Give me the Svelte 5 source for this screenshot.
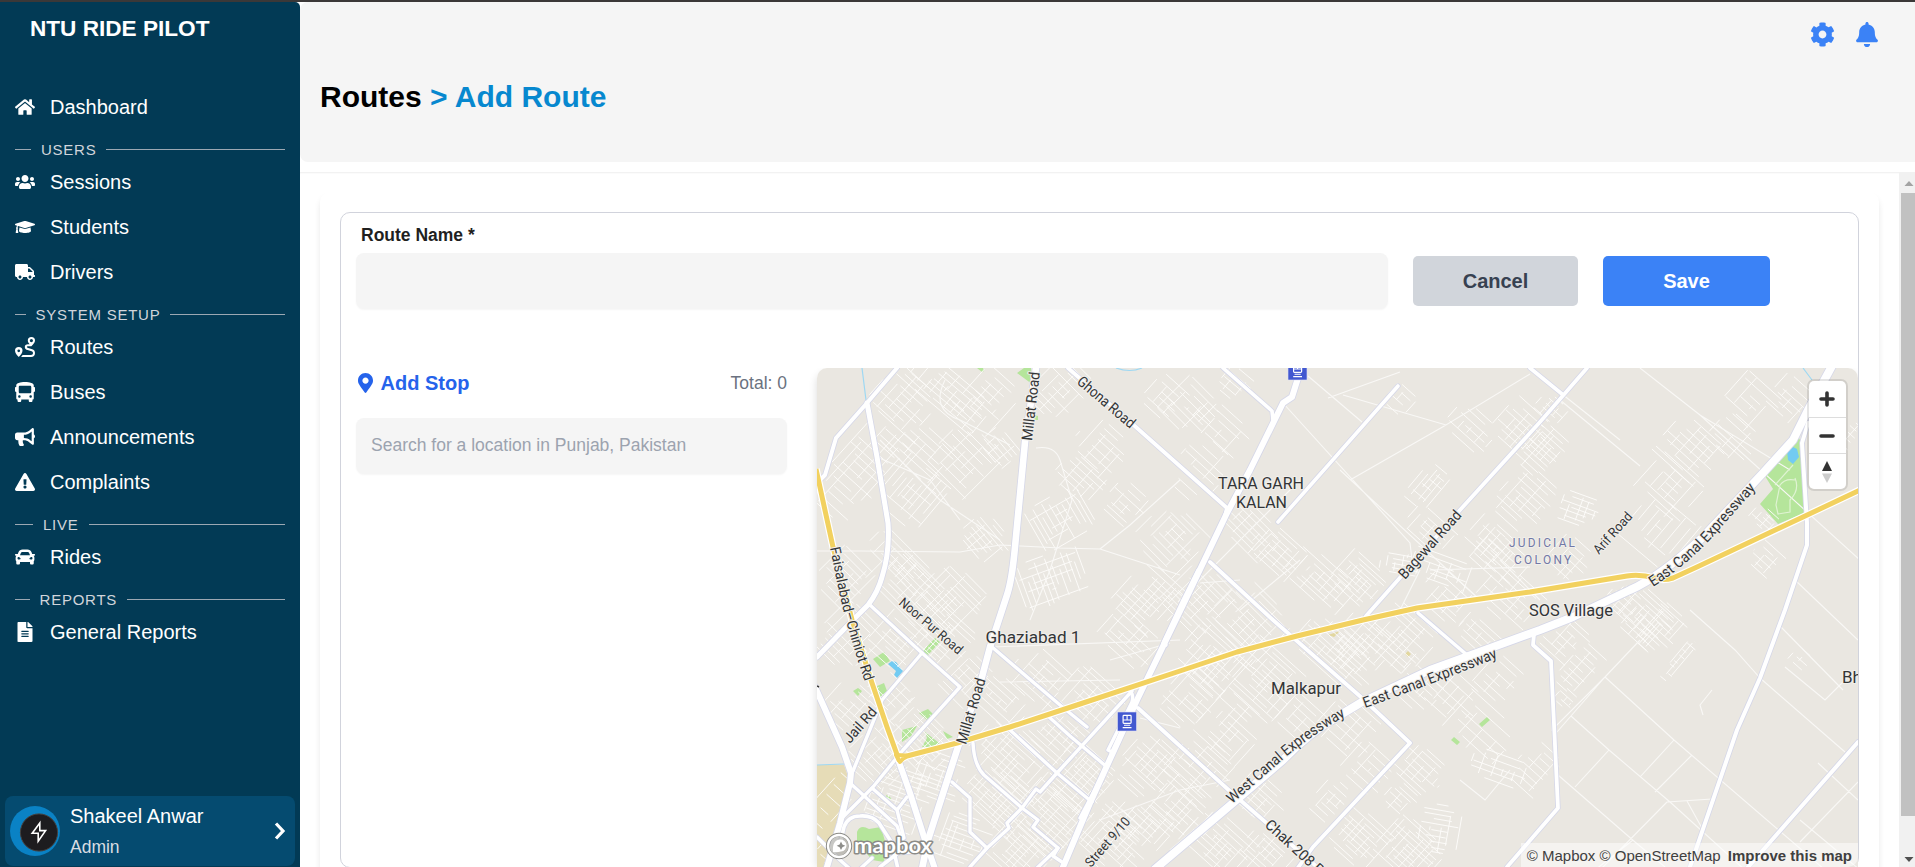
<script>
  const icons = {
    home: ['0 0 576 512', 'M280.37 148.26L96 300.11V464a16 16 0 0 0 16 16l112.06-.29a16 16 0 0 0 15.92-16V368a16 16 0 0 1 16-16h64a16 16 0 0 1 16 16v95.64a16 16 0 0 0 16 16.05L464 480a16 16 0 0 0 16-16V300L295.67 148.26a12.19 12.19 0 0 0-15.3 0zM571.6 251.47L488 182.56V44.05a12 12 0 0 0-12-12h-56a12 12 0 0 0-12 12v72.61L318.47 43a48 48 0 0 0-61 0L4.34 251.47a12 12 0 0 0-1.6 16.9l25.5 31A12 12 0 0 0 45.15 301l235.22-193.74a12.19 12.19 0 0 1 15.3 0L530.9 301a12 12 0 0 0 16.9-1.6l25.5-31a12 12 0 0 0-1.7-16.93z'],
    users: ['0 0 640 512', 'M96 224c35.3 0 64-28.7 64-64s-28.7-64-64-64-64 28.7-64 64 28.7 64 64 64zm448 0c35.3 0 64-28.7 64-64s-28.7-64-64-64-64 28.7-64 64 28.7 64 64 64zm32 32h-64c-17.6 0-33.5 7.1-45.1 18.6 40.3 22.1 68.9 62 75.1 109.4h66c17.7 0 32-14.3 32-32v-32c0-35.3-28.7-64-64-64zm-256 0c61.9 0 112-50.1 112-112S381.9 32 320 32 208 82.1 208 144s50.1 112 112 112zm76.8 32h-8.3c-20.8 10-43.9 16-68.5 16s-47.6-6-68.5-16h-8.3C179.6 288 128 339.6 128 403.2V432c0 26.5 21.5 48 48 48h288c26.5 0 48-21.5 48-48v-28.8c0-63.6-51.6-115.2-115.2-115.2zm-223.7-13.4C161.5 263.1 145.6 256 128 256H64c-35.3 0-64 28.7-64 64v32c0 17.7 14.3 32 32 32h65.9c6.3-47.4 34.9-87.3 75.2-109.4z'],
    cap: ['0 0 640 512', 'M622.34 153.2L343.4 67.5c-15.2-4.67-31.6-4.67-46.79 0L17.66 153.2c-23.54 7.23-23.54 38.36 0 45.59l48.63 14.94c-10.67 13.19-17.23 29.28-17.88 46.9C38.78 266.15 32 276.11 32 288c0 10.78 5.68 19.85 13.86 25.65L20.33 428.53C18.11 438.52 25.71 448 35.94 448h56.11c10.24 0 17.84-9.48 15.62-19.47L82.14 313.65C90.32 307.85 96 298.78 96 288c0-11.57-6.47-21.25-15.66-26.87.76-15.02 8.44-28.3 20.69-36.72L296.6 284.5c9.06 2.78 26.44 6.25 46.79 0l278.95-85.7c23.55-7.24 23.55-38.36 0-45.6zM352.79 315.09c-28.53 8.76-52.84 3.92-65.59 0l-145.02-44.55L128 384c0 35.35 85.96 64 192 64s192-28.65 192-64l-14.18-113.47-145.03 44.56z'],
    truck: ['0 0 640 512', 'M624 352h-16V243.9c0-12.7-5.1-24.9-14.1-33.9L494 110.1c-9-9-21.2-14.1-33.9-14.1H416V48c0-26.5-21.5-48-48-48H48C21.5 0 0 21.5 0 48v320c0 26.5 21.5 48 48 48h16c0 53 43 96 96 96s96-43 96-96h128c0 53 43 96 96 96s96-43 96-96h48c8.8 0 16-7.2 16-16v-32c0-8.8-7.2-16-16-16zM160 464c-26.5 0-48-21.5-48-48s21.5-48 48-48 48 21.5 48 48-21.5 48-48 48zm320 0c-26.5 0-48-21.5-48-48s21.5-48 48-48 48 21.5 48 48-21.5 48-48 48zm80-208H416V144h44.1l99.9 99.9V256z'],
    route: ['0 0 20 20', 'M3.75 10A3.75 3.75 0 0 0 0 13.75C0 15.8 1.8 18.200 3.750 20C5.700 18.200 7.500 15.800 7.500 13.750A3.750 3.750 0 0 0 3.750 10ZM3.750 15.200A1.350 1.350 0 1 1 3.750 12.500A1.350 1.350 0 0 1 3.750 15.200ZM16.400 0A3.600 3.600 0 0 0 12.800 3.600C12.800 4.900 13.600 6.100 14.600 7.200H13C11 7.200 9.800 8.300 9.800 9.900C9.800 11.600 11 12.500 12.600 13L16.600 14.200C17.500 14.500 18 15 18 16C18 17.200 17.300 17.900 16 17.900H7.600C7.100 18.700 6.500 19.400 5.900 20H16C18.500 20 20 18.400 20 16C20 14.100 19 12.800 17.200 12.300L13.200 11.100C12.300 10.800 11.900 10.500 11.900 10C11.900 9.400 12.300 9.200 13 9.200H16.400C18.400 7.500 20 5.400 20 3.600A3.600 3.600 0 0 0 16.400 0ZM16.400 5.200A1.600 1.600 0 1 1 16.400 2A1.600 1.600 0 0 1 16.400 5.200Z'],
    bus: ['0 0 512 512', 'M488 128h-8V80c0-44.8-99.2-80-224-80S32 35.2 32 80v48h-8c-13.25 0-24 10.74-24 24v80c0 13.25 10.75 24 24 24h8v160c0 17.67 14.33 32 32 32v32c0 17.67 14.33 32 32 32h32c17.67 0 32-14.33 32-32v-32h192v32c0 17.67 14.33 32 32 32h32c17.67 0 32-14.33 32-32v-32h6.4c16 0 25.6-12.8 25.6-25.6V256h8c13.25 0 24-10.75 24-24v-80c0-13.26-10.75-24-24-24zM112 400c-17.67 0-32-14.33-32-32s14.33-32 32-32 32 14.33 32 32-14.33 32-32 32zm16-112c-17.67 0-32-14.33-32-32V128c0-17.67 14.33-32 32-32h256c17.67 0 32 14.33 32 32v128c0 17.67-14.33 32-32 32H128zm272 112c-17.67 0-32-14.33-32-32s14.33-32 32-32 32 14.33 32 32-14.33 32-32 32z'],
    horn: ['0 0 576 512', 'M576 240c0-23.63-12.95-44.04-32-55.12V32.01C544 23.26 537.02 0 512 0c-7.12 0-14.19 2.38-19.98 7.02l-85.03 68.03C364.28 109.19 310.66 128 256 128H64c-35.35 0-64 28.65-64 64v96c0 35.35 28.65 64 64 64h33.7c-1.39 10.48-2.18 21.14-2.18 32 0 39.77 9.26 77.35 25.56 110.94 5.19 10.69 16.52 17.06 28.4 17.06h74.28c26.05 0 41.69-29.84 25.9-50.56-16.4-21.52-26.15-48.36-26.15-77.44 0-11.11 1.62-21.79 4.41-32H256c54.66 0 108.28 18.81 150.98 52.95l85.03 68.03a32.023 32.023 0 0 0 19.98 7.02c24.92 0 32-22.78 32-32V295.13C563.05 284.04 576 263.63 576 240zm-96 141.42l-33.05-26.44C392.95 311.78 325.12 288 256 288v-96c69.12 0 136.95-23.78 190.95-66.98L480 98.58v282.84z'],
    warn: ['0 0 576 512', 'M569.517 440.013C587.975 472.007 564.806 512 527.94 512H48.054c-36.937 0-59.999-40.055-41.577-71.987L246.423 23.985c18.467-32.009 64.72-31.951 83.154 0l239.94 416.028zM288 354c-25.405 0-46 20.595-46 46s20.595 46 46 46 46-20.595 46-46-20.595-46-46-46zm-43.673-165.346l7.418 136c.347 6.364 5.609 11.346 11.982 11.346h48.546c6.373 0 11.635-4.982 11.982-11.346l7.418-136c.375-6.874-5.098-12.654-11.982-12.654h-63.383c-6.884 0-12.356 5.78-11.981 12.654z'],
    car: ['0 0 512 512', 'M499.99 176h-59.87l-16.64-41.6C406.38 91.63 365.57 64 319.5 64h-127c-46.06 0-86.88 27.63-103.99 70.4L71.87 176H12.01C4.2 176-1.53 183.34.37 190.91l6 24C7.7 220.25 12.5 224 18.01 224h20.07C24.65 235.73 16 252.78 16 272v48c0 16.12 6.16 30.67 16 41.93V416c0 17.67 14.33 32 32 32h32c17.67 0 32-14.33 32-32v-32h256v32c0 17.67 14.33 32 32 32h32c17.67 0 32-14.33 32-32v-54.07c9.84-11.25 16-25.8 16-41.93v-48c0-19.22-8.65-36.27-22.07-48H494c5.51 0 10.31-3.75 11.64-9.09l6-24c1.89-7.57-3.84-14.91-11.65-14.91zm-352.06-17.83c7.29-18.22 24.94-30.17 44.57-30.17h127c19.63 0 37.28 11.95 44.57 30.17L384 208H128l19.93-49.83zM96 319.8c-19.2 0-32-12.76-32-31.9S76.8 256 96 256s48 28.71 48 47.85-28.8 15.95-48 15.95zm320 0c-19.2 0-48 3.19-48-15.95S396.8 256 416 256s32 12.76 32 31.9-12.8 31.9-32 31.9z'],
    file: ['0 0 384 512', 'M224 136V0H24C10.7 0 0 10.7 0 24v464c0 13.3 10.7 24 24 24h336c13.3 0 24-10.7 24-24V160H248c-13.2 0-24-10.8-24-24zm64 236c0 6.6-5.4 12-12 12H108c-6.6 0-12-5.4-12-12v-8c0-6.6 5.4-12 12-12h168c6.6 0 12 5.4 12 12v8zm0-64c0 6.6-5.4 12-12 12H108c-6.6 0-12-5.4-12-12v-8c0-6.6 5.4-12 12-12h168c6.6 0 12 5.4 12 12v8zm0-72v8c0 6.6-5.4 12-12 12H108c-6.6 0-12-5.4-12-12v-8c0-6.6 5.4-12 12-12h168c6.6 0 12 5.4 12 12zm96-114.1v6.1H256V0h6.1c6.4 0 12.5 2.5 17 7l97.9 98c4.5 4.5 7 10.6 7 16.9z'],
    pin: ['0 0 384 512', 'M172.268 501.67C26.97 291.031 0 269.413 0 192 0 85.961 85.961 0 192 0s192 85.961 192 192c0 77.413-26.97 99.031-172.268 309.67-9.535 13.774-29.93 13.773-39.464 0zM192 272c44.183 0 80-35.817 80-80s-35.817-80-80-80-80 35.817-80 80 35.817 80 80 80z'],
    cog: ['0 0 512 512', 'M487.4 315.7l-42.6-24.6c4.3-23.2 4.3-47 0-70.2l42.6-24.6c4.9-2.8 7.1-8.6 5.5-14-11.1-35.6-30-67.8-54.7-94.6-3.8-4.1-10-5.1-14.8-2.3L380.8 110c-17.9-15.4-38.5-27.3-60.8-35.1V25.8c0-5.6-3.9-10.5-9.4-11.7-36.7-8.2-74.3-7.8-109.2 0-5.5 1.2-9.4 6.1-9.4 11.7V75c-22.2 7.9-42.8 19.8-60.8 35.1L88.7 85.5c-4.9-2.8-11-1.9-14.8 2.3-24.7 26.7-43.6 58.9-54.7 94.6-1.7 5.4.6 11.2 5.5 14L67.3 221c-4.3 23.2-4.3 47 0 70.2l-42.6 24.6c-4.9 2.8-7.1 8.6-5.5 14 11.1 35.6 30 67.8 54.7 94.6 3.8 4.1 10 5.1 14.8 2.3l42.6-24.6c17.9 15.4 38.5 27.3 60.8 35.1v49.2c0 5.6 3.9 10.5 9.4 11.7 36.7 8.2 74.3 7.8 109.2 0 5.5-1.2 9.4-6.1 9.4-11.7v-49.2c22.2-7.9 42.8-19.8 60.8-35.1l42.6 24.6c4.9 2.8 11 1.9 14.8-2.3 24.7-26.7 43.6-58.9 54.7-94.6 1.5-5.5-.7-11.3-5.6-14.1zM256 336c-44.1 0-80-35.9-80-80s35.9-80 80-80 80 35.9 80 80-35.9 80-80 80z'],
    bell: ['0 0 448 512', 'M224 512c35.32 0 63.97-28.65 63.97-64H160.03c0 35.35 28.65 64 63.97 64zm215.39-149.71c-19.32-20.76-55.47-51.99-55.47-154.29 0-77.7-54.48-139.9-127.94-155.16V32c0-17.67-14.32-32-31.98-32s-31.98 14.33-31.98 32v20.84C118.56 68.1 64.08 130.3 64.08 208c0 102.3-36.15 133.53-55.47 154.29-6 6.45-8.66 14.16-8.61 21.71.11 16.4 12.98 32 32.1 32h383.8c19.12 0 32-15.6 32.1-32 .05-7.55-2.61-15.27-8.61-21.71z']
  };

  const nav = [
    { icon: 'home', label: 'Dashboard' },
    { section: 'USERS', lead: 16 },
    { icon: 'users', label: 'Sessions' },
    { icon: 'cap', label: 'Students' },
    { icon: 'truck', label: 'Drivers' },
    { section: 'SYSTEM SETUP', lead: 10.6 },
    { icon: 'route', label: 'Routes' },
    { icon: 'bus', label: 'Buses' },
    { icon: 'horn', label: 'Announcements' },
    { icon: 'warn', label: 'Complaints' },
    { section: 'LIVE', lead: 18 },
    { icon: 'car', label: 'Rides' },
    { section: 'REPORTS', lead: 14.6 },
    { icon: 'file', label: 'General Reports' }
  ];

  // Wide carriageways, secondary streets and the highway: [stroke width, path]
  const roads = [
    [3.4, 'M870 605L922 653L960 687L903 750L873 787L843 817'],
    [3.4, 'M922 653L882 700L853 771'],
    [4, 'M897 368L867 403L836 438L825 475L821 479L815 481'],
    [5, 'M867 403L877 457L888 523Q890 552 882 577Q878 592 868 605L853 620L817 657'],
    [3.4, 'M992 647L1060 705L1087 727'],
    [3.4, 'M1048 716L1070 736L1107 767'],
    [3.4, 'M1010 730L1057 773L1092 802'],
    [3.4, 'M1132 691L1057 773L1040 792L1036 789L1022 808L1007 823L1009 828L987 848L970 867'],
    [3.4, 'M973 743Q974 765 984 775L1022 808L1038 820L1033 827L1058 848L1053 856L1062 862'],
    [3.4, 'M1058 848L1036 869'],
    [3.4, 'M952 782L970 798L970 832L987 848'],
    [3.4, 'M1130 691Q1134 695 1132 702L1108 750L1112 752L1107 767L1080 818'],
    [3.4, 'M850 783L897 826L903 842'],
    [3.4, 'M872 788L897 810L907 797M897 810L904 838'],
    [3.6, 'M841 840L844 827Q848 816 860 816Q872 815 879 823L892 843L898 869M880 867L898 853L925 851'],
    [3.4, 'M817 837L840 860L850 869M860 869L872 858'],
    [3.6, 'M1223 368L1272 411L1273 420'],
    [3.8, 'M1068 368L1137 428L1227 508L1224 520'],
    [3.8, 'M1210 562L1273 620L1362 698L1410 743L1313 847L1297 869'],
    [3.6, 'M1278 522L1398 386'],
    [3.8, 'M1366 616L1460 510L1540 422L1587 368M1530 368L1562 394'],
    [3.6, 'M1418 613L1467 655'],
    [3.8, 'M1138 708L1170 737L1232 793L1317 867'],
    [3.8, 'M1534 634L1533 645L1551 661L1558 808L1507 867'],
    [4, 'M1808 423L1802 443L1807 523L1807 545L1785 610L1760 678L1737 730L1690 867'],
    [4, 'M1858 742L1757 857L1748 867'],
    [3.4, 'M1198 570L1183 600L1163 643L1166 645'],
    [6, 'M815 687L842 747L851 773L850 783L840 823L827 867'],
    [6, 'M899 762L910 793L925 840L935 869'],
    [6.6, 'M1036 368L1025 442L1015 547Q1012 580 1007 595L990 647L982 677L957 750L928 840L922 869'],
    [6, 'M1298 378L1292 397L1283 403L1250 470L1227 513L1183 605L1137 700L1090 803L1063 867'],
    [8, 'M1155 869L1240 797L1283 760Q1310 732 1337 717L1362 702L1430 670L1540 630L1573 617L1630 590Q1660 577 1703 537L1763 473L1793 440L1808 410L1832 366']
  ];

  const highway =
    'M816 469L833 547L852 620L872 683L887 727L899 760L907 756L957 743L1010 727L1077 705L1180 671L1237 652L1297 636L1363 620L1417 608L1530 592L1627 576Q1640 574 1655 578Q1663 581 1673 578L1697 567L1803 517L1860 490';

  const lanes =
    'M1178 602L1300 480M1308 376L1362 422M1328 398L1400 372M1343 395L1446 425L1530 374M1350 480L1446 425M1283 403L1410 543L1412 560M1340 470L1480 600M1560 400L1640 466M1562 394L1620 440M1640 368L1700 415L1790 470M1700 415L1860 560M1795 580L1858 640M1780 626L1843 690M1760 678L1845 752M1690 610L1735 650L1760 678M1605 677L1674 740L1860 900M1571 716L1609 750L1670 802L1800 920M1558 775L1635 842L1665 867M1609 750L1575 787M1674 740L1640 777M1692 755L1655 792M1667 802L1712 799M1667 802L1600 870M1633 840L1595 870M1687 801L1703 830M1551 661L1552 730L1605 677L1640 640M1557 732L1605 677M1712 690L1700 705L1703 715M1785 667L1825 700L1850 675M1818 763L1858 800M1858 782L1800 842M1460 780L1485 800L1510 770M1170 643L1110 660M817 551L860 551L960 552L1000 545L1060 548L1100 549L1180 575M877 457L930 480L960 520M880 440L940 500L1000 540M1036 448Q1055 445 1060 460L1072 500L1050 570L1030 620M1100 549L1130 525L1180 480M945 380Q930 410 960 420L1010 445M1000 682L1120 680M992 647L1180 640M1180 728L1140 718M1100 820L1180 790L1230 780M1170 850L1230 800M1200 583L1240 580M1240 610L1300 560M1420 570L1400 610M1430 570L1530 567M1500 560L1540 600M1860 870L1800 820';

  // Local street blocks: centre, size, bearing and spacing
  const blocks = [
    [862, 470, 55, 110, 42, 7], [905, 400, 60, 50, 42, 6], [950, 395, 90, 40, 40, 6], [925, 455, 60, 46, 42, 7],
    [915, 495, 60, 60, -50, 6], [965, 460, 60, 60, 45, 7], [985, 400, 70, 60, 42, 7], [1000, 450, 40, 30, 50, 5],
    [1060, 390, 46, 60, 45, 6], [1100, 450, 55, 50, 42, 7], [1080, 480, 50, 40, 42, 6], [1060, 520, 50, 60, 60, 5],
    [1050, 580, 50, 70, 70, 5], [1125, 505, 40, 40, 42, 6], [1170, 540, 60, 60, 45, 5], [1165, 400, 40, 40, 42, 7],
    [1190, 410, 50, 50, 45, 6], [1220, 430, 60, 40, 42, 8], [1200, 470, 50, 60, 42, 8], [1235, 385, 30, 30, 40, 6],
    [900, 560, 70, 30, 45, 6], [910, 590, 80, 50, 45, 5], [950, 600, 60, 60, 45, 5], [985, 540, 46, 40, 50, 5],
    [845, 580, 50, 50, 45, 6], [850, 640, 60, 60, 45, 6], [900, 640, 50, 60, 42, 5], [945, 640, 50, 50, 42, 5],
    [965, 680, 40, 50, 45, 6], [890, 700, 50, 40, 45, 6], [850, 710, 50, 50, 42, 6], [920, 740, 70, 50, 45, 5],
    [880, 760, 60, 50, 45, 5], [940, 780, 50, 50, 20, 5], [1000, 700, 60, 40, 42, 6], [1040, 680, 60, 50, 42, 6],
    [1090, 700, 60, 50, 42, 5], [1010, 760, 80, 60, 42, 5], [1060, 740, 60, 50, 42, 5], [1080, 780, 60, 60, 42, 4],
    [1000, 800, 70, 50, 42, 4], [1050, 820, 70, 60, 42, 4], [960, 840, 60, 50, 20, 5], [1020, 850, 70, 50, 42, 4],
    [1110, 840, 60, 60, 42, 5], [900, 800, 60, 60, 20, 5], [1150, 770, 60, 60, 42, 5], [1140, 830, 60, 60, 42, 5],
    [1200, 600, 60, 60, 45, 5], [1250, 620, 70, 60, 45, 5], [1215, 660, 70, 60, 42, 5], [1265, 680, 70, 60, 42, 5],
    [1150, 600, 60, 60, 42, 5], [1130, 640, 60, 40, 42, 6], [1250, 530, 60, 40, 45, 5], [1280, 555, 50, 40, 42, 5],
    [1320, 580, 70, 40, 42, 5], [1360, 580, 50, 40, 42, 4], [1330, 650, 70, 50, 42, 5], [1360, 650, 60, 60, 42, 5],
    [1400, 640, 60, 60, 42, 5], [1400, 400, 26, 26, 42, 8], [1470, 430, 50, 40, 42, 7], [1430, 485, 50, 30, -50, 5],
    [1430, 530, 50, 30, 42, 6], [1440, 570, 70, 30, 20, 5], [1400, 565, 40, 20, 10, 5], [1490, 545, 50, 40, 42, 5],
    [1525, 500, 50, 60, 42, 6], [1520, 430, 50, 50, 42, 6], [1540, 450, 40, 50, 42, 5], [1500, 560, 50, 40, 42, 6],
    [1450, 600, 60, 40, 42, 6], [1510, 600, 60, 50, 42, 6], [1480, 640, 50, 30, 42, 6], [1570, 560, 40, 40, 42, 6],
    [1580, 510, 40, 30, 20, 5], [1550, 410, 30, 26, 42, 5], [1690, 450, 60, 50, 42, 6], [1670, 490, 60, 50, 42, 7],
    [1660, 530, 60, 60, -50, 8], [1750, 405, 50, 50, 42, 8], [1790, 400, 40, 40, 42, 7], [1735, 440, 50, 40, 42, 9],
    [1765, 520, 30, 20, 42, 4], [1765, 560, 30, 30, 42, 5], [1645, 620, 50, 50, 42, 5], [1660, 630, 40, 50, 42, 5],
    [1565, 640, 40, 40, 42, 6], [1580, 670, 30, 50, 42, 6], [1565, 700, 20, 20, 42, 5], [1625, 605, 40, 30, 42, 5],
    [1845, 440, 20, 40, 42, 6], [1680, 660, 50, 12, -50, 4], [1420, 690, 50, 50, 42, 7], [1450, 700, 60, 50, 42, 9],
    [1500, 680, 40, 40, 42, 8], [1480, 730, 70, 50, 42, 10], [1535, 770, 40, 50, 42, 7], [1500, 770, 60, 30, 20, 6],
    [1420, 770, 50, 40, 42, 5], [1370, 770, 50, 40, 42, 7], [1330, 800, 30, 40, 42, 6], [1400, 800, 30, 30, 42, 5],
    [1360, 840, 60, 50, 42, 5], [1410, 850, 60, 50, 42, 4], [1440, 830, 40, 50, 10, 5], [1230, 730, 60, 60, 42, 6],
    [1200, 770, 60, 60, 42, 6], [1180, 810, 50, 60, 42, 5], [1260, 800, 50, 40, 42, 5], [1220, 845, 70, 50, 42, 5],
    [1270, 850, 50, 40, 42, 5], [1350, 730, 60, 50, 42, 7], [1300, 720, 40, 40, 42, 7], [1190, 700, 50, 60, 42, 6],
    [835, 800, 30, 70, 42, 12], [830, 850, 20, 30, 42, 8], [1800, 660, 20, 20, 42, 8]
  ];

  let seed = 17;
  const rand = () => {
    seed = (seed * 16807) % 2147483647;
    return seed / 2147483647;
  };

  function block([cx, cy, w, h, deg, gap]) {
    const c = Math.cos((deg * Math.PI) / 180);
    const s = Math.sin((deg * Math.PI) / 180);
    const pt = (x, y) => `${(cx + x * c - y * s).toFixed(1)} ${(cy + x * s + y * c).toFixed(1)}`;
    let d = '';
    for (let y = -h / 2; y <= h / 2; y += gap * (0.8 + rand() * 0.5)) {
      const a = -w / 2 + rand() * w * 0.4;
      const b = w / 2 - rand() * w * 0.4;
      d += `M${pt(a, y)}L${pt(b, y)}`;
    }
    for (let x = -w / 2; x <= w / 2; x += gap * (1.1 + rand() * 1.2)) {
      const a = -h / 2 + rand() * h * 0.5;
      const b = h / 2 - rand() * h * 0.5;
      d += `M${pt(x, a)}L${pt(x, b)}`;
    }
    return d;
  }
  const streets = blocks.map(block).join('');

  // Street names: text, baseline, drawn length, size
  const names = [
    ['Millat Road', 'M1032 441L1040 372', 69, 15],
    ['Ghona Road', 'M1076 383L1130 429', 71, 15],
    ['Bagewal Road', 'M1405 580L1463 515', 86, 15],
    ['Arif Road', 'M1599 555L1634 516', 51, 13.5],
    ['East Canal Expressway', 'M1653 587Q1690 563 1717 532L1757 487', 143, 15],
    ['East Canal Expressway', 'M1365 708Q1435 683 1497 658', 142, 15],
    ['West Canal Expressway', 'M1232 804L1287 756Q1315 733 1346 716', 144, 15],
    ['Chak 208 RB Road', 'M1264 826L1369 922', 120, 15],
    ['Street 9/10', 'M1091 868L1132 821', 61, 13.5],
    ['Noor Pur Road', 'M898 604L928 629Q943 642 960 657', 79, 13.5],
    ['Jail Rd', 'M850 744L878 712', 42, 14.5],
    ['Millat Road', 'M966 745L986 679', 68, 15],
    ['Faisalabad–Chiniot Rd', 'M830 548L842 606Q853 648 865 682', 138, 14.5]
  ];

  const places = [
    ['TARA GARH', 1218, 489, 86, 17],
    ['KALAN', 1236, 508, 51, 17],
    ['Ghaziabad 1', 985.5, 643, 95, 17],
    ['Malkapur', 1271, 694, 70, 17],
    ['SOS Village', 1529, 616, 84, 17]
  ];
</script>

{#snippet icon(name, w, h)}
  <svg width={w} height={h} viewBox={icons[name][0]} fill="currentColor" fill-rule={name === 'route' ? 'evenodd' : 'nonzero'}><path d={icons[name][1]} /></svg>
{/snippet}

{#snippet station(x, y)}
  <g transform="translate({x} {y})">
    <rect width="19" height="19" fill="#4258d0" stroke="#dfe2f3" stroke-width=".6" />
    <rect x="5.6" y="3.4" width="8" height="8" rx=".8" fill="none" stroke="#fff" stroke-width="1.2" />
    <path d="M5.600 8h8M9.600 3.400v4.600M6.500 13.300h6.200M5.200 15.600h8.800" stroke="#fff" stroke-width="1.1" fill="none" />
  </g>
{/snippet}

<div class="page">
  <aside class="sidebar">
    <div class="brand">NTU RIDE PILOT</div>
    <nav>
      {#each nav as n}
        {#if n.section}
          <div class="section"><i style="width:{n.lead}px"></i><span>{n.section}</span><b></b></div>
        {:else}
          <div class="item"><span class="glyph">{@render icon(n.icon, 20, 20)}</span>{n.label}</div>
        {/if}
      {/each}
    </nav>
    <div class="user">
      <div class="avatar">
        <svg width="50" height="50" viewBox="0 0 50 50">
          <circle cx="29" cy="26.5" r="18.6" fill="#1d1c1f" stroke="#45413f" stroke-width="1" />
          <path d="M29.8 17L22.2 27.2H28.2V35.2L35.6 24.6H29.8Z" fill="none" stroke="#fff" stroke-width="1.6" />
        </svg>
      </div>
      <div class="who"><span>Shakeel Anwar</span><small>Admin</small></div>
      <svg class="chev" width="12" height="20" viewBox="0 0 12 20"><path d="M2 2.5L9 10L2 17.5" fill="none" stroke="#fff" stroke-width="3.2" /></svg>
    </div>
  </aside>

  <div class="main">
    <header>
      <div class="tools">{@render icon('cog', 25, 25)}{@render icon('bell', 22, 25)}</div>
      <h1>Routes <span>&gt; Add Route</span></h1>
    </header>
    <div class="scroller">
      <div class="content">
        <div class="panel">
          <div class="card">
            <label for="route">Route Name *</label>
            <div class="row">
              <input id="route" class="field" />
              <button class="cancel">Cancel</button>
              <button class="save">Save</button>
            </div>
            <div class="cols">
              <div class="stops">
                <div class="stophead">
                  <span class="add">{@render icon('pin', 15, 20)}Add Stop</span>
                  <span class="total">Total: 0</span>
                </div>
                <input class="field search" placeholder="Search for a location in Punjab, Pakistan" />
              </div>
              <div class="map">
                <svg class="canvas" width="1041" height="499" viewBox="817 368 1041 499">
                  <rect x="817" y="368" width="1041" height="499" fill="#eae7e1" />
                  <path d="M817 765L844 765L850 783L840 810L838 823L827 867H817Z" fill="#e6dcb7" />
                  <g fill="#b5e59b">
                    <path d="M1799 438L1802 445L1807 512L1778 524L1760 504L1773 489L1765 476Z" />
                    <path d="M1017 373L1024 368H1031L1032 384ZM977 368h6l1 3-2 1ZM1034 415l4 1v4l-4 0Z" />
                    <path d="M873 659L884 652L890 661L880 667ZM923 651L935 638L940 642L928 655ZM877 686l7-3 3 8-8 7-4-4ZM853 691l5-3 4 3-4 5Z" />
                    <path d="M902 730L917 726L911 736L902 742ZM919 713l9-4 5 5-6 6ZM925 732l14 11-2 4h-15l5-9ZM943 731l10 6-6 2ZM934 727l5 2M948 719l4 2" />
                    <path d="M857 832Q860 824 869 829L881 827L886 845L884 862L872 860L864 850L857 846Z" />
                    <path d="M1479 724l8-7 3 3-8 7ZM1451 740l3-3 6 5-3 3ZM886 795l4 2 2 3-5-2Z" />
                  </g>
                  <path d="M1787 450L1793 447L1797 449L1799 457L1793 464L1788 460ZM892 661L896 662L903 671L897 678L894 675L896 671L888 664Z" fill="#72cbf2" />
                  <path d="M862 368L866 400M817 765L844 764M1116 368Q1130 373 1142 368M1803 368L1812 380" fill="none" stroke="#9ed8f3" stroke-width="1.2" />
                  <path d="M1328 635l12-4-6 6ZM1405 654l3-3 3 3-3 3Z" fill="#e2d79f" />
                  <path d={streets} fill="none" stroke="#fdfcfa" stroke-width=".95" />
                  <path d={lanes} fill="none" stroke="#f9f8f6" stroke-width="1.1" />
                  <path d="M1793 465L1775 485M1795 478Q1800 490 1790 500L1790 512L1778 514L1776 505L1780 485Q1785 478 1795 480" fill="none" stroke="#dff3d2" stroke-width="1.2" />
                  <g fill="none" stroke="#d5d7e8" stroke-linejoin="round" stroke-linecap="round">
                    {#each roads as [w, d]}<path {d} stroke-width={w + 1.6} />{/each}
                  </g>
                  <g fill="none" stroke="#fff" stroke-linejoin="round" stroke-linecap="round">
                    {#each roads as [w, d]}<path {d} stroke-width={w} />{/each}
                  </g>
                  <path d={highway} fill="none" stroke="#fff" stroke-width="7.4" stroke-linejoin="round" />
                  <path d={highway} fill="none" stroke="#f2d15f" stroke-width="5" stroke-linejoin="round" />
                  <path d="M896 755L906 755.500L900 762Z" fill="#fff" stroke="#f2d15f" stroke-width="4" stroke-linejoin="round" />
                  {@render station(1288, 361)}
                  {@render station(1117.5, 712)}
                  <g class="names">
                    {#each names as [text, d, len, size], i}
                      <path id="street-{i}" {d} fill="none" stroke="none" />
                      <text font-size={size} textLength={len} lengthAdjust="spacingAndGlyphs"><textPath href="#street-{i}" textLength={len} lengthAdjust="spacingAndGlyphs">{text}</textPath></text>
                    {/each}
                    {#each places as [text, x, y, len, size]}
                      <text {x} {y} font-size={size} textLength={len} lengthAdjust="spacingAndGlyphs">{text}</text>
                    {/each}
                    <text x="1842" y="683" font-size="17">Bhaiwala</text>
                    <g class="district">
                      <text transform="translate(1509 547) scale(.88 1)" textLength="75">JUDICIAL</text>
                      <text transform="translate(1514 564) scale(.88 1)" textLength="65">COLONY</text>
                    </g>
                  </g>
                  <path d="M817 686l2 1" stroke="#333" stroke-width="1.5" />
                  <g class="logo">
                    <circle cx="839" cy="846" r="11.3" fill="#9a9a96" fill-opacity=".55" stroke="#8b8b87" stroke-width="3.8" />
                    <circle cx="839" cy="846" r="11" fill="none" stroke="#fff" stroke-width="2.4" />
                    <path d="M833 852Q832 840 840 839.500A6 6 0 1 1 841 851.500Q837 852.500 833 852Z" fill="#fff" />
                    <path d="M841 841.500l1.400 2.900 2.900 1.400-2.900 1.400-1.400 2.900-1.400-2.900-2.900-1.400 2.900-1.400z" fill="#8e8e8a" />
                    <text x="854" y="853" textLength="78" lengthAdjust="spacingAndGlyphs">mapbox</text>
                  </g>
                </svg>
                <div class="controls">
                  <div><svg width="16" height="16" viewBox="0 0 16 16"><path d="M8 2v12M2 8h12" stroke="#333" stroke-width="3.6" stroke-linecap="round" /></svg></div>
                  <div><svg width="16" height="16" viewBox="0 0 16 16"><path d="M2 8h12" stroke="#333" stroke-width="3.6" stroke-linecap="round" /></svg></div>
                  <div><svg width="12" height="24" viewBox="0 0 12 24"><path d="M1 11L6 1L11 11Z" fill="#333" /><path d="M1 13.500L6 23L11 13.500Z" fill="#ccc" /></svg></div>
                </div>
                <div class="attrib">© Mapbox © OpenStreetMap <b>Improve this map</b></div>
              </div>
            </div>
          </div>
        </div>
      </div>
      <div class="scrollbar">
        <svg width="16" height="21" viewBox="0 0 16 21"><path d="M5.500 14L10 9L14.500 14Z" fill="#a3a3a3" /></svg>
        <div class="thumb"></div>
        <svg width="16" height="51" viewBox="0 0 16 51"><path d="M5.500 41L10 46L14.500 41Z" fill="#505050" /></svg>
      </div>
    </div>
  </div>
</div>

<style>
  :global(body) { margin: 0; overflow: hidden; background: #fff; }
  .page, .page :global(*) { box-sizing: border-box; }
  .page { display: flex; width: 1915px; height: 867px; border-top: 2px solid #3b3838; overflow: hidden; font-family: "Liberation Sans", Arial, sans-serif; }
  svg { display: block; flex: none; }
  .sidebar { width: 300px; flex: none; display: flex; flex-direction: column; background: #023a55; color: #fff; border-top-right-radius: 5px; }
  .brand { font-weight: 700; font-size: 22.6px; line-height: 26px; padding: 14px 0 0 30px; height: 82.5px; }
  nav { padding: 0 15px; }
  .item { display: flex; align-items: center; height: 45px; font-size: 20px; }
  .glyph { width: 35px; }
  .section { display: flex; align-items: center; height: 30px; padding-top: 10px; font-size: 15px; letter-spacing: .75px; color: #d1d5db; }
  .section i, .section b { height: 1px; background: #9ca8b3; }
  .section b { flex: 1; }
  .section span { padding: 0 10px; margin-top: -1px; }
  .user { margin: auto 5px 1px; height: 70px; border-radius: 8px; display: flex; align-items: center; padding: 0 9px 0 5px; background: #054b70; }
  .avatar { width: 50px; height: 50px; border-radius: 50%; background: #0a82c5; }
  .who { flex: 1; padding-left: 10px; display: flex; flex-direction: column; font-size: 20px; line-height: 30px; }
  .who small { font-size: 17.5px; line-height: 32px; margin-bottom: -2px; color: #d9dde2; }
  .main { flex: 1; display: flex; flex-direction: column; min-width: 0; }
  header { height: 160px; background: #f5f5f5; border-radius: 8px 0 0 8px; }
  .tools { display: flex; justify-content: flex-end; gap: 21.5px; padding: 20px 37px 0 0; height: 59px; color: #3b82f6; }
  h1 { margin: 0; padding: 19px 0 0 20px; font-size: 30px; line-height: 34px; color: #000; }
  h1 span { color: #0788cf; }
  .scroller { margin-top: 10px; flex: 1; min-height: 0; display: flex; overflow: hidden; box-shadow: inset 0 2px 2px -1px rgba(0,0,0,.07); }
  .content { flex: 1; padding: 20px 20px 0; }
  .panel { height: 720px; padding: 20px 20px 0; border-radius: 10px; box-shadow: 0 5px 7px -1px rgba(0,0,0,.12); }
  .card { height: 656px; border: 1px solid #d1d3dc; border-radius: 10px; padding: 10px 0 0 15px; }
  label { display: block; padding-left: 5px; font-size: 17.5px; font-weight: 700; line-height: 25px; color: #1f1f1f; height: 30px; }
  .row { display: flex; align-items: center; }
  .field { height: 56px; width: 100%; border: 0; border-radius: 8px; background: #f5f5f5; padding: 0 15px; font: 17.5px "Liberation Sans", Arial, sans-serif; box-shadow: 0 1px 2px rgba(0,0,0,.04); outline: 0; }
  .search { padding-bottom: 2px; }
  .field::placeholder { color: #9ca3af; opacity: 1; }
  .row .field { width: 1032px; }
  button { height: 50px; border: 0; border-radius: 5px; font: 700 20px "Liberation Sans", Arial, sans-serif; padding: 0; }
  .cancel { width: 165px; margin: 0 25px; background: #d1d5db; color: #374151; }
  .save { width: 167px; background: #3b82f6; color: #fff; }
  .cols { display: flex; gap: 30px; padding-top: 59px; }
  .stops { width: 431px; flex: none; }
  .stophead { display: flex; justify-content: space-between; align-items: center; height: 30px; margin-bottom: 20px; }
  .add { display: flex; align-items: center; gap: 7.5px; padding-left: 2px; font-size: 20px; font-weight: 700; color: #2563eb; }
  .total { font-size: 17.5px; color: #6b7280; }
  .map { position: relative; width: 1041px; height: 499px; flex: none; border-radius: 10px; box-shadow: 0 5px 8px rgba(0,0,0,.15); clip-path: inset(0 0 0 -10px); }
  .canvas { width: 1041px; height: 499px; border-radius: 10px 10px 0 0; }
  .names text { font-family: Roboto, "Liberation Sans", sans-serif; fill: #333537; stroke: #f1efeb; stroke-width: 2.2px; paint-order: stroke; stroke-linejoin: round; }
  .names .district text { font-size: 13.5px; fill: #7278a6; }
  .logo text { font: 700 20px Lato, sans-serif; fill: #fff; stroke: #8b8b87; stroke-width: 3px; paint-order: stroke; stroke-linejoin: round; }
  .controls { position: absolute; right: 12.5px; top: 13px; width: 37px; background: #fff; border-radius: 5px; box-shadow: 0 0 0 2px rgba(0,0,0,.1); }
  .controls div { height: 36px; display: flex; align-items: center; justify-content: center; }
  .controls div + div { border-top: 1px solid #ddd; }
  .attrib { position: absolute; right: 0; bottom: 0; height: 24px; padding: 0 6px 0 6px; background: rgba(255,255,255,.5); border-bottom-right-radius: 10px; font-size: 15px; line-height: 25px; color: #404040; white-space: nowrap; }
  .attrib b { padding-left: 3px; }
  .scrollbar { width: 16px; background: #f1f1f1; display: flex; flex-direction: column; }
  .thumb { flex: 1; margin-left: 2px; background: #c1c1c1; }
</style>
